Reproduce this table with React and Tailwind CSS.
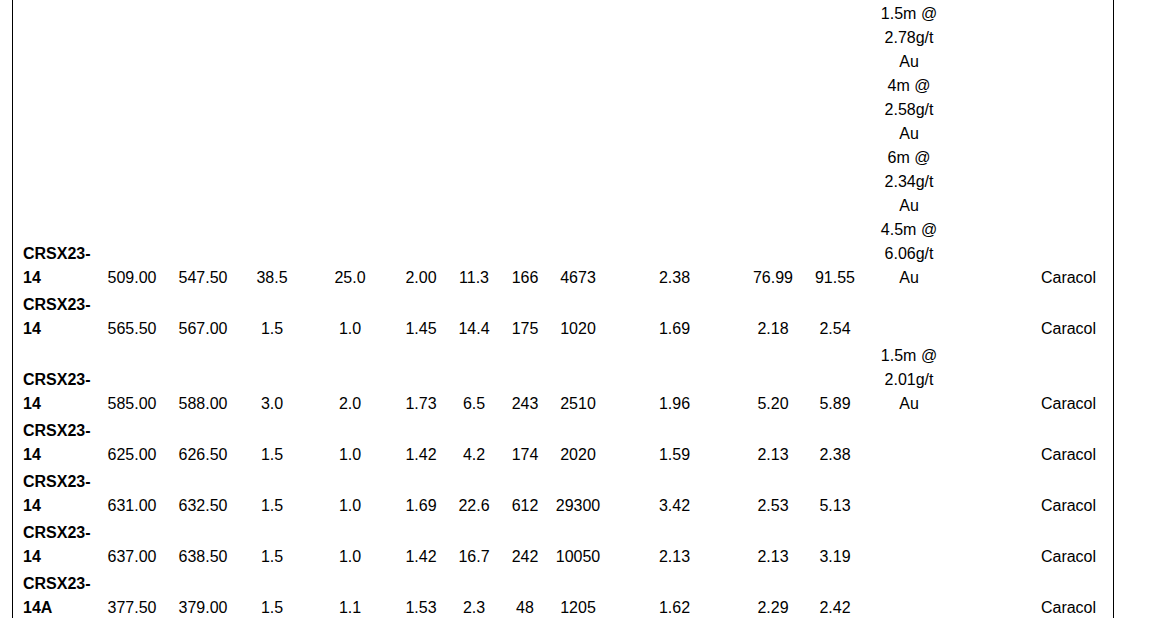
import React from 'react';

const cols = [
  'w-[87px]', 'w-[64px]', 'w-[78px]', 'w-[60px]', 'w-[96px]', 'w-[46px]', 'w-[60px]',
  'w-[42px]', 'w-[64px]', 'w-[129px]', 'w-[68px]', 'w-[56px]', 'w-[92px]', 'w-[158px]',
];

const rows = [
  {
    id: 'CRSX23-14',
    vals: ['509.00', '547.50', '38.5', '25.0', '2.00', '11.3', '166', '4673', '2.38', '76.99', '91.55'],
    hits: ['1.5m @ 2.78g/t Au', '4m @ 2.58g/t Au', '6m @ 2.34g/t Au', '4.5m @ 6.06g/t Au'],
  },
  {
    id: 'CRSX23-14',
    vals: ['565.50', '567.00', '1.5', '1.0', '1.45', '14.4', '175', '1020', '1.69', '2.18', '2.54'],
    hits: [],
  },
  {
    id: 'CRSX23-14',
    vals: ['585.00', '588.00', '3.0', '2.0', '1.73', '6.5', '243', '2510', '1.96', '5.20', '5.89'],
    hits: ['1.5m @ 2.01g/t Au'],
  },
  {
    id: 'CRSX23-14',
    vals: ['625.00', '626.50', '1.5', '1.0', '1.42', '4.2', '174', '2020', '1.59', '2.13', '2.38'],
    hits: [],
  },
  {
    id: 'CRSX23-14',
    vals: ['631.00', '632.50', '1.5', '1.0', '1.69', '22.6', '612', '29300', '3.42', '2.53', '5.13'],
    hits: [],
  },
  {
    id: 'CRSX23-14',
    vals: ['637.00', '638.50', '1.5', '1.0', '1.42', '16.7', '242', '10050', '2.13', '2.13', '3.19'],
    hits: [],
  },
  {
    id: 'CRSX23-14A',
    vals: ['377.50', '379.00', '1.5', '1.1', '1.53', '2.3', '48', '1205', '1.62', '2.29', '2.42'],
    hits: [],
  },
];

export default function App() {
  return (
    <div className="min-h-screen bg-white font-['Liberation_Sans',Arial,sans-serif] text-[16px] leading-6 text-black">
      <div className="ml-[12px] w-[1102px] min-h-screen border-x border-black">
        <table className="table-fixed border-collapse w-[1100px]">
          <colgroup>
            {cols.map((c, i) => (
              <col key={i} className={c} />
            ))}
          </colgroup>
          <tbody>
            {rows.map((r, i) => (
              <tr key={i}>
                {/* drill hole id */}
                <td className={`${i === 0 ? 'pt-[2px]' : 'pt-[3px]'} pl-[10px] align-bottom font-bold text-left`}>
                  {r.id}
                </td>
                {r.vals.map((v, j) => (
                  <td key={j} className={`${i === 0 ? 'pt-[2px]' : 'pt-[3px]'} align-bottom text-center`}>
                    {v}
                  </td>
                ))}
                {/* intercepts */}
                <td className={`${i === 0 ? 'pt-[2px]' : 'pt-[3px]'} px-[12px] align-bottom text-center`}>
                  {r.hits.map((h, k) => (
                    <div key={k}>{h}</div>
                  ))}
                </td>
                <td className={`${i === 0 ? 'pt-[2px]' : 'pt-[3px]'} pl-[69px] align-bottom text-center`}>
                  Caracol
                </td>
              </tr>
            ))}
          </tbody>
        </table>
      </div>
    </div>
  );
}
